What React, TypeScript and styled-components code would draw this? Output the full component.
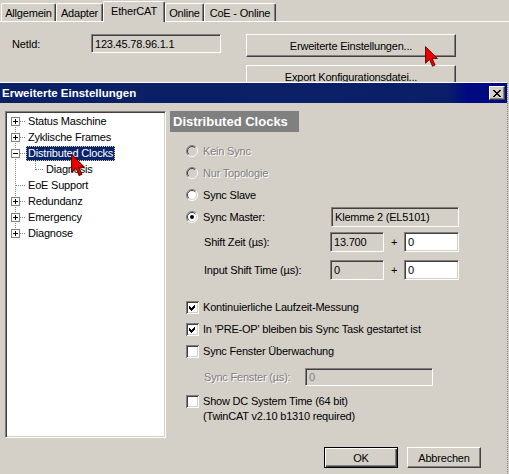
import React from 'react';
import styled, { createGlobalStyle, css } from 'styled-components';

const GlobalStyle = createGlobalStyle`
  html, body {
    margin: 0;
    padding: 0;
  }
  body {
    width: 509px;
    height: 474px;
    overflow: hidden;
    background: #d4d0c8;
    font-family: "Liberation Sans", Arial, sans-serif;
    font-size: 11px;
    letter-spacing: -0.2px;
    color: #000;
  }
`;

const Screen = styled.div`
  position: relative;
  width: 509px;
  height: 474px;
  overflow: hidden;
  background: #d4d0c8;
`;

/* ---------- property page behind the dialog ---------- */

const TabStrip = styled.div`
  display: flex;
  align-items: flex-end;
  height: 21px;
  padding-left: 1px;
  position: relative;
  z-index: 1;
`;

const Tab = styled.div<{ $w: number; $active?: boolean }>`
  box-sizing: border-box;
  width: ${p => p.$w}px;
  height: ${p => (p.$active ? 21 : 18)}px;
  margin-bottom: ${p => (p.$active ? -1 : 0)}px;
  border-top: 1px solid #fff;
  border-left: 1px solid #fff;
  border-right: 1px solid #404040;
  border-radius: 2px 2px 0 0;
  box-shadow: inset -1px 0 #808080;
  background: #d4d0c8;
  display: flex;
  align-items: center;
  justify-content: center;
  padding-bottom: ${p => (p.$active ? 2 : 0)}px;
  white-space: nowrap;
`;

const TabPanel = styled.div`
  border-top: 1px solid #fff;
  display: flex;
  align-items: flex-start;
  padding: 12px 0 0 12px;
`;

const NetLabel = styled.span`
  width: 79px;
  line-height: 20px;
`;

const Field = styled.div<{ $w: number; $h?: number; $tone?: 'gray' | 'white' | 'disabled' }>`
  box-sizing: border-box;
  flex: none;
  width: ${p => p.$w}px;
  height: ${p => p.$h ?? 20}px;
  border: 1px solid;
  border-color: #808080 #fff #fff #808080;
  box-shadow: inset 1px 1px #404040, inset -1px -1px #d4d0c8;
  background: ${p => (p.$tone === 'white' ? '#fff' : '#d4d0c8')};
  color: ${p => (p.$tone === 'disabled' ? '#808080' : '#000')};
  padding: 0 3px;
  display: flex;
  align-items: center;
  white-space: nowrap;
  overflow: hidden;
`;

const ButtonColumn = styled.div`
  display: flex;
  flex-direction: column;
  gap: 8px;
  margin-left: 25px;
`;

const Button = styled.button<{ $w: number; $h: number; $default?: boolean }>`
  box-sizing: border-box;
  width: ${p => p.$w}px;
  height: ${p => p.$h}px;
  padding: 0;
  font: inherit;
  letter-spacing: inherit;
  color: #000;
  background: #d4d0c8;
  border: 1px solid;
  border-color: #fff #404040 #404040 #fff;
  box-shadow: inset -1px -1px #808080, inset 1px 1px #d4d0c8;
  ${p =>
    p.$default &&
    css`
      border: 1px solid #000;
      box-shadow: inset 1px 1px #fff, inset -1px -1px #404040, inset -2px -2px #808080;
    `}
`;

/* ---------- dialog ---------- */

const Dialog = styled.section`
  position: absolute;
  top: 82px;
  left: 0;
  width: 508px;
  height: 392px;
  box-sizing: border-box;
  border-top: 1px solid #fff;
  border-right: 1px dotted #808080;
  background: #d4d0c8;
  display: flex;
  flex-direction: column;
`;

const TitleBar = styled.header`
  height: 20px;
  display: flex;
  align-items: center;
  justify-content: space-between;
  padding: 0 2px 0 2px;
  background: linear-gradient(90deg, #0a2064 0%, #0a1f68 88%, #000a80 92%, #000a80 100%);
`;

const TitleText = styled.span`
  color: #fff;
  font-weight: bold;
  font-size: 11.5px;
  letter-spacing: 0;
`;

const CloseButton = styled.div`
  box-sizing: border-box;
  width: 16px;
  height: 14px;
  background: #d4d0c8;
  border: 1px solid;
  border-color: #fff #404040 #404040 #fff;
  box-shadow: inset -1px -1px #808080;
  display: flex;
  align-items: center;
  justify-content: center;
`;

const Body = styled.div`
  display: flex;
  align-items: flex-start;
  gap: 4px;
  padding: 8px 0 0 5px;
`;

const TreeBox = styled.div`
  box-sizing: border-box;
  width: 161px;
  height: 327px;
  background: #fff;
  border: 1px solid;
  border-color: #808080 #fff #fff #808080;
  box-shadow: inset 1px 1px #404040, inset -1px -1px #d4d0c8;
  padding: 1px 0 0 1px;
`;

const TreeRow = styled.div`
  display: flex;
  align-items: center;
  height: 16px;
`;

const TreeLabel = styled.span<{ $selected?: boolean }>`
  box-sizing: border-box;
  height: 15px;
  line-height: 13px;
  padding: 0 1px;
  border: 1px solid transparent;
  white-space: nowrap;
  ${p =>
    p.$selected &&
    css`
      background: #0a246a;
      color: #fff;
      border: 1px dotted #e6d68a;
    `}
`;

const Panel = styled.div`
  width: 337px;
  display: flex;
  flex-direction: column;
`;

const PanelHeader = styled.div`
  box-sizing: border-box;
  width: 129px;
  height: 21px;
  line-height: 21px;
  padding-left: 3px;
  background: #808080;
  color: #fff;
  font-weight: bold;
  font-size: 13px;
  letter-spacing: 0;
  margin-bottom: 8px;
`;

const OptionRow = styled.div<{ $mt?: number; $h?: number; $indent?: number }>`
  display: flex;
  align-items: center;
  height: ${p => p.$h ?? 22}px;
  margin-top: ${p => p.$mt ?? 0}px;
  padding-left: ${p => p.$indent ?? 16}px;
  white-space: nowrap;
`;

const MultiRow = styled.div<{ $mt: number }>`
  display: flex;
  align-items: flex-start;
  margin-top: ${p => p.$mt}px;
  padding-left: 16px;
`;

const Label = styled.span<{ $w?: number; $disabled?: boolean; $gap?: number }>`
  flex: none;
  margin-left: ${p => p.$gap ?? 0}px;
  ${p => p.$w !== undefined && css`width: ${p.$w}px;`}
  line-height: 15px;
  white-space: nowrap;
  ${p =>
    p.$disabled &&
    css`
      color: #808080;
      text-shadow: 1px 1px 0 #fff;
    `}
`;

const Plus = styled.span`
  width: 20px;
  text-align: center;
`;

const ButtonRow = styled.div`
  display: flex;
  justify-content: flex-end;
  gap: 9px;
  padding-right: 26px;
  margin-top: 23px;
`;

const Cursor = styled.svg<{ $x: number; $y: number }>`
  position: absolute;
  left: ${p => p.$x}px;
  top: ${p => p.$y}px;
  pointer-events: none;
  z-index: 5;
`;

/* ---------- drawings ---------- */

const Radio = ({ checked, disabled }: { checked?: boolean; disabled?: boolean }) => (
  <svg width={12} height={12} viewBox="0 0 12 12" style={{ flex: 'none' }}>
    <circle cx={6} cy={6} r={5} fill={disabled ? '#d4d0c8' : '#fff'} />
    <path d="M9.9 2.1 A5.5 5.5 0 0 0 2.1 9.9" stroke="#808080" fill="none" />
    <path d="M2.1 9.9 A5.5 5.5 0 0 0 9.9 2.1" stroke="#fff" fill="none" />
    <path d="M9.2 2.8 A4.5 4.5 0 0 0 2.8 9.2" stroke="#404040" fill="none" />
    <path d="M2.8 9.2 A4.5 4.5 0 0 0 9.2 2.8" stroke="#d4d0c8" fill="none" />
    {checked && <circle cx={6} cy={6} r={2} fill="#000" />}
  </svg>
);

const Check = ({ checked }: { checked?: boolean }) => (
  <svg width={13} height={13} viewBox="0 0 13 13" style={{ flex: 'none' }} shapeRendering="crispEdges">
    <rect x={0} y={0} width={13} height={13} fill="#fff" />
    <path d="M0.5 12.5 V0.5 H12.5" stroke="#808080" fill="none" />
    <path d="M1.5 11.5 V1.5 H11.5" stroke="#404040" fill="none" />
    <path d="M0.5 12.5 H12.5 V0.5" stroke="#fff" fill="none" />
    <path d="M1.5 11.5 H11.5 V1.5" stroke="#d4d0c8" fill="none" />
    {checked && <path d="M3 5 L5 7 L9 3 L9 6 L5 10 L3 8 Z" fill="#000" />}
  </svg>
);

type Branch = 'first' | 'mid' | 'last';

const TreeGlyph = ({ branch, toggle, child }: { branch: Branch; toggle?: 'plus' | 'minus'; child?: boolean }) => {
  const w = child ? 37 : 19;
  return (
    <svg width={w} height={16} style={{ flex: 'none' }} shapeRendering="crispEdges">
      <g stroke="#808080" strokeDasharray="1 1" fill="none">
        <line x1={8.5} y1={branch === 'first' ? 8 : 0} x2={8.5} y2={branch === 'last' ? 9 : 16} />
        {!child && <line x1={toggle ? 13 : 9} y1={8.5} x2={19} y2={8.5} />}
        {child && (
          <>
            <line x1={28.5} y1={0} x2={28.5} y2={9} />
            <line x1={29} y1={8.5} x2={37} y2={8.5} />
          </>
        )}
      </g>
      {toggle && (
        <g>
          <rect x={4.5} y={4.5} width={8} height={8} fill="#fff" stroke="#808080" />
          <line x1={6} y1={8.5} x2={11} y2={8.5} stroke="#000" />
          {toggle === 'plus' && <line x1={8.5} y1={6} x2={8.5} y2={11} stroke="#000" />}
        </g>
      )}
    </svg>
  );
};

const Arrow = ({ x, y, w, h }: { x: number; y: number; w: number; h: number }) => (
  <Cursor $x={x} $y={y} width={w} height={h} viewBox="0 0 12.5 20">
    <path
      d="M0.5 0.5 V16.5 L4.4 12.8 L7.2 19.3 L9.7 18.2 L6.9 11.9 H11.9 Z"
      fill="#e80000"
      stroke="#6a0000"
      strokeWidth={0.9}
      strokeLinejoin="round"
    />
  </Cursor>
);

const tree: { label: string; branch: Branch; toggle?: 'plus' | 'minus'; child?: boolean; selected?: boolean }[] = [
  { label: 'Status Maschine', branch: 'first', toggle: 'plus' },
  { label: 'Zyklische Frames', branch: 'mid', toggle: 'plus' },
  { label: 'Distributed Clocks', branch: 'mid', toggle: 'minus', selected: true },
  { label: 'Diagnosis', branch: 'mid', child: true },
  { label: 'EoE Support', branch: 'mid' },
  { label: 'Redundanz', branch: 'mid', toggle: 'plus' },
  { label: 'Emergency', branch: 'mid', toggle: 'plus' },
  { label: 'Diagnose', branch: 'last', toggle: 'plus' },
];

const tabs = [
  { label: 'Allgemein', w: 55 },
  { label: 'Adapter', w: 47 },
  { label: 'EtherCAT', w: 62, active: true },
  { label: 'Online', w: 39 },
  { label: 'CoE - Online', w: 72 },
];

const App: React.FC = () => {
  return (
    <Screen>
      <GlobalStyle />

      <TabStrip>
        {tabs.map(t => (
          <Tab key={t.label} $w={t.w} $active={t.active}>
            {t.label}
          </Tab>
        ))}
      </TabStrip>
      <TabPanel>
        <NetLabel>NetId:</NetLabel>
        <Field $w={130} $h={19}>
          123.45.78.96.1.1
        </Field>
        <ButtonColumn>
          <Button $w={210} $h={23}>Erweiterte Einstellungen...</Button>
          <Button $w={210} $h={23}>Export Konfigurationsdatei...</Button>
        </ButtonColumn>
      </TabPanel>

      <Arrow x={425} y={46} w={13} h={21} />

      <Dialog>
        <TitleBar>
          <TitleText>Erweiterte Einstellungen</TitleText>
          <CloseButton>
            <svg width={8} height={7} viewBox="0 0 8 7" shapeRendering="crispEdges">
              <path d="M0 0h2v1h1v1h2V1h1V0h2v1H7v1H6v1H5v1h1v1h1v1h1v1H6V6H5V5H3v1H2v1H0V6h1V5h1V4h1V3H2V2H1V1H0z" fill="#000" />
            </svg>
          </CloseButton>
        </TitleBar>

        <Body>
          <TreeBox>
            {tree.map(item => (
              <TreeRow key={item.label}>
                <TreeGlyph branch={item.branch} toggle={item.toggle} child={item.child} />
                <TreeLabel $selected={item.selected}>{item.label}</TreeLabel>
              </TreeRow>
            ))}
          </TreeBox>

          <Panel>
            <PanelHeader>Distributed Clocks</PanelHeader>

            <OptionRow>
              <Radio disabled />
              <Label $gap={5} $disabled>Kein Sync</Label>
            </OptionRow>
            <OptionRow>
              <Radio disabled />
              <Label $gap={5} $disabled>Nur Topologie</Label>
            </OptionRow>
            <OptionRow>
              <Radio />
              <Label $gap={5}>Sync Slave</Label>
            </OptionRow>
            <OptionRow>
              <Radio checked />
              <Label $gap={5} $w={128}>Sync Master:</Label>
              <Field $w={128}>Klemme 2 (EL5101)</Field>
            </OptionRow>

            <OptionRow $mt={4} $h={20} $indent={34}>
              <Label $w={126}>Shift Zeit (µs):</Label>
              <Field $w={54}>13.700</Field>
              <Plus>+</Plus>
              <Field $w={55} $tone="white">0</Field>
            </OptionRow>
            <OptionRow $mt={8} $h={20} $indent={34}>
              <Label $w={126}>Input Shift Time (µs):</Label>
              <Field $w={54}>0</Field>
              <Plus>+</Plus>
              <Field $w={55} $tone="white">0</Field>
            </OptionRow>

            <OptionRow $mt={16}>
              <Check checked />
              <Label $gap={4}>Kontinuierliche Laufzeit-Messung</Label>
            </OptionRow>
            <OptionRow>
              <Check checked />
              <Label $gap={4}>In 'PRE-OP' bleiben bis Sync Task gestartet ist</Label>
            </OptionRow>
            <OptionRow>
              <Check />
              <Label $gap={4}>Sync Fenster Überwachung</Label>
            </OptionRow>

            <OptionRow $mt={6} $h={18} $indent={34}>
              <Label $w={101} $disabled>Sync Fenster (µs):</Label>
              <Field $w={128} $h={18} $tone="disabled">0</Field>
            </OptionRow>

            <MultiRow $mt={8}>
              <span style={{ marginTop: 1 }}>
                <Check />
              </span>
              <Label $gap={4}>
                Show DC System Time (64 bit)
                <br />
                (TwinCAT v2.10 b1310 required)
              </Label>
            </MultiRow>

            <ButtonRow>
              <Button $w={74} $h={21} $default>OK</Button>
              <Button $w={74} $h={21}>Abbrechen</Button>
            </ButtonRow>
          </Panel>
        </Body>
      </Dialog>

      <Arrow x={71} y={153} w={14} h={24} />
    </Screen>
  );
};

export default App;
